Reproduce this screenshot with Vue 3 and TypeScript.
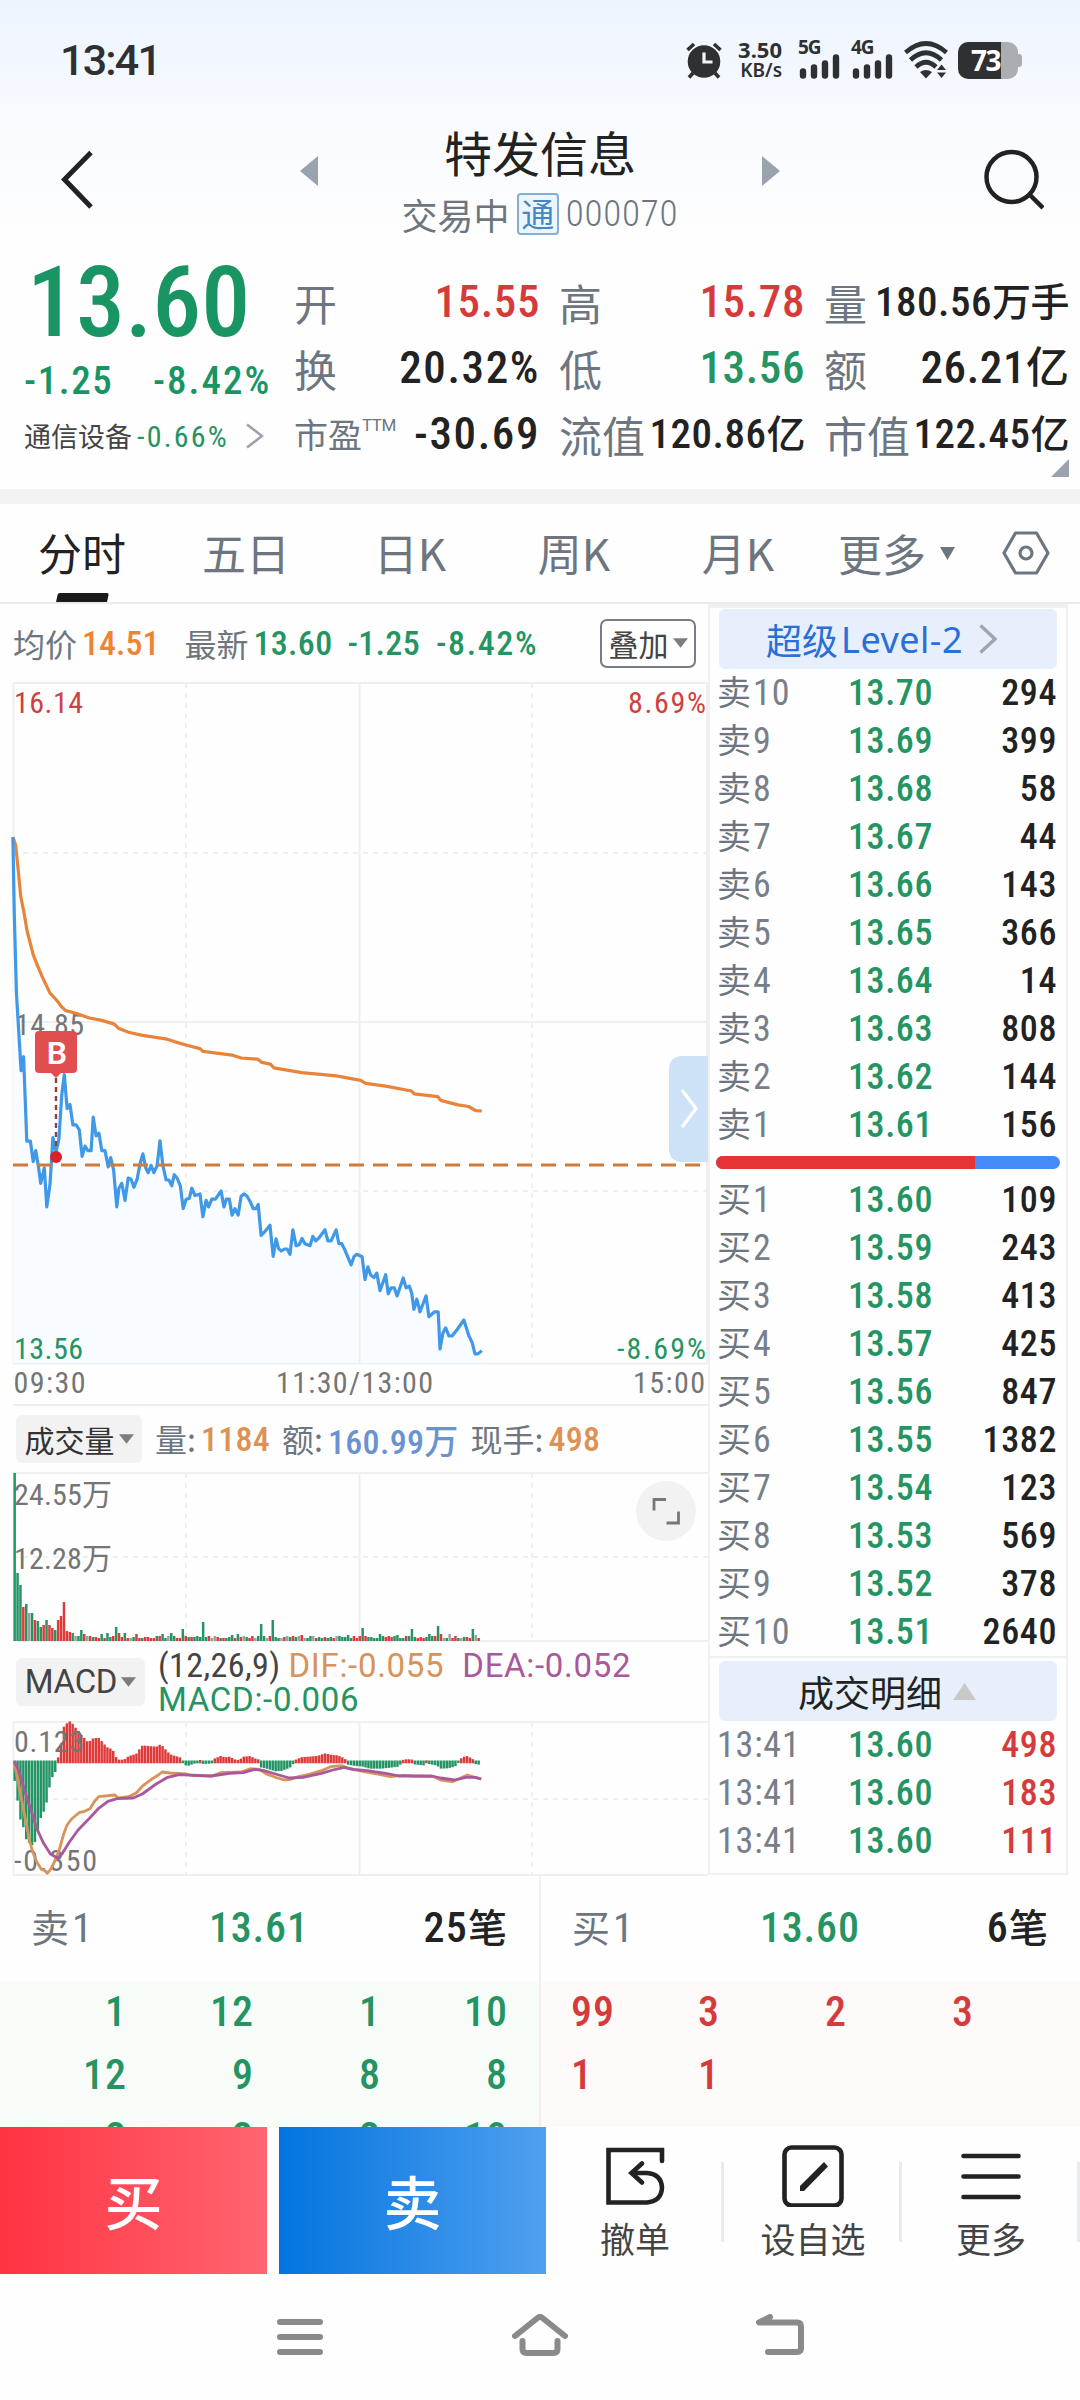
<script setup lang="ts">
type Tone = 'up' | 'down' | 'flat'
type Point = [number, number]

interface Stat { label: string; value: string; unit?: string; tone?: Tone; size?: string; sup?: string }
interface Bar { x: number; y: number; h: number; tone: Tone }

const stats: Stat[] = [
  { label: '开', value: '15.55', tone: 'up' },
  { label: '高', value: '15.78', tone: 'up' },
  { label: '量', value: '180.56', unit: '万手', size: 'small' },
  { label: '换', value: '20.32%', size: 'wide' },
  { label: '低', value: '13.56', tone: 'down' },
  { label: '额', value: '26.21', unit: '亿' },
  { label: '市盈', value: '-30.69', sup: 'TTM', size: 'wide' },
  { label: '流值', value: '120.86', unit: '亿', size: 'small' },
  { label: '市值', value: '122.45', unit: '亿', size: 'small' },
]

const tabs = ['分时', '五日', '日K', '周K', '月K']

const asks: [string, string, string][] = [
  ['10', '13.70', '294'], ['9', '13.69', '399'], ['8', '13.68', '58'], ['7', '13.67', '44'], ['6', '13.66', '143'],
  ['5', '13.65', '366'], ['4', '13.64', '14'], ['3', '13.63', '808'], ['2', '13.62', '144'], ['1', '13.61', '156'],
]
const bids: [string, string, string][] = [
  ['1', '13.60', '109'], ['2', '13.59', '243'], ['3', '13.58', '413'], ['4', '13.57', '425'], ['5', '13.56', '847'],
  ['6', '13.55', '1382'], ['7', '13.54', '123'], ['8', '13.53', '569'], ['9', '13.52', '378'], ['10', '13.51', '2640'],
]
const trades: [string, string, string][] = [
  ['13:41', '13.60', '498'], ['13:41', '13.60', '183'], ['13:41', '13.60', '111'],
]
const askQueue = ['1', '12', '1', '10', '12', '9', '8', '8', '2', '2', '2', '10']
const bidQueue = ['99', '3', '2', '3', '1', '1']

const parse = (s: string): Point[] => s.trim().split(/\s+/).map((p) => p.split(',').map(Number) as Point)
const line = (pts: Point[], sx: number, sy: number, dy: number): string =>
  pts.map(([x, y]) => `${(x / sx).toFixed(1)},${(y / sy + dy).toFixed(1)}`).join(' ')

// Intraday price and average price, sampled on a 2.8 × 2.45 grid
const pricePts = parse(`36,140 40,330 46,520 54,640 59,712 66,678 75,885 85,885 93,935 100,908 108,950 114,988 124,950 131,1046
140,990 148,876 157,910 165,880 173,770 180,722 188,805 196,795 204,845 213,845 222,857 230,922 238,897 246,908 255,908 261,826
269,872 277,865 285,908 294,908 303,948 310,925 318,955 327,1046 333,1000 341,988 350,1030 359,975 367,978 375,998 384,978
392,940 400,916 408,950 415,962 423,944 431,962 440,945 448,884 456,945 465,980 473,980 481,994 488,967 496,975 505,995
513,1050 521,1027 530,1025 537,1000 546,1018 560,1014 568,1070 577,1030 584,1046 593,1027 603,1027 619,1007 627,1046 634,1027
642,1027 650,1066 658,1050 667,1066 675,1020 684,1014 692,1020 700,1032 709,1050 717,1050 723,1040 731,1116 740,1108 756,1091
765,1167 773,1124 780,1148 788,1154 797,1149 804,1149 812,1162 820,1102 829,1141 838,1138 846,1123 854,1136 868,1141 876,1118
884,1129 893,1122 910,1102 918,1129 927,1129 941,1102 949,1136 957,1136 965,1150 983,1188 991,1168 999,1162 1014,1168
1022,1224 1030,1193 1038,1213 1047,1219 1055,1208 1064,1251 1080,1212 1087,1259 1095,1244 1104,1244 1112,1264 1129,1220
1137,1244 1146,1240 1153,1258 1159,1297 1167,1272 1176,1303 1193,1264 1201,1315 1217,1303 1227,1303 1232,1394 1240,1355
1248,1342 1257,1362 1266,1362 1281,1345 1299,1323 1313,1362 1322,1378 1330,1406 1338,1406 1349,1398`)
const avgPts = parse(`36,140 44,160 52,230 58,285 66,320 76,370 93,428 105,455 117,480 128,500 140,522 157,538 173,556 184,565
215,572 250,583 285,589 320,598 333,609 360,618 395,625 468,635 488,641 523,650 560,658 568,665 650,674 675,681 722,684 733,692
757,696 767,705 845,717 942,725 1010,736 1024,743 1080,750 1152,762 1160,769 1226,776 1234,785 1282,796 1312,800 1332,810 1349,811`)
const priceLine = line(pricePts, 2.8, 2.45, 98)
const avgLine = line(avgPts, 2.8, 2.45, 98)
const priceArea = `12.9,681 ${priceLine} 481.8,681`

const PITCH = 2.9
const COUNT = 161

// Volume bars: opening minutes and later spikes, quiet minutes follow a fixed rhythm
const opening: [number, Tone][] = [
  [168, 'down'], [68, 'down'], [56, 'down'], [34, 'up'], [37, 'down'], [28, 'flat'], [28, 'down'], [21, 'up'], [20, 'down'], [14, 'down'],
  [16, 'up'], [21, 'down'], [16, 'up'], [13, 'up'], [11, 'down'], [21, 'up'], [25, 'up'], [39, 'up'], [10, 'up'], [9, 'up'], [8, 'down'],
  [5, 'flat'], [5, 'down'], [11, 'down'], [7, 'up'], [5, 'flat'],
]
const spikes: Record<number, [number, Tone]> = {
  30: [7, 'down'], 32: [8, 'down'], 35: [14, 'down'], 36: [8, 'up'], 38: [8, 'down'], 42: [7, 'up'], 51: [7, 'down'], 54: [8, 'down'],
  58: [12, 'down'], 65: [19, 'down'], 75: [6, 'down'], 77: [7, 'down'], 85: [17, 'down'], 89: [21, 'down'], 99: [6, 'up'], 115: [6, 'down'],
  120: [13, 'down'], 126: [7, 'down'], 132: [6, 'down'], 137: [12, 'down'], 143: [7, 'down'], 146: [15, 'down'], 147: [7, 'up'],
  150: [7, 'flat'], 158: [12, 'down'], 159: [6, 'flat'], 160: [3, 'up'],
}
const volumes: Bar[] = Array.from({ length: COUNT }, (_, i) => {
  const n = (i * 7 + ((i * i) % 11)) % 13
  const quiet: [number, Tone] = [3 + (n % 3), n < 6 ? 'up' : n < 11 ? 'down' : 'flat']
  const [h, tone] = opening[i] ?? spikes[i] ?? quiet
  return { x: 13.4 + i * PITCH, y: 169 - h, h, tone }
})

// MACD histogram edge, interpolated between samples on a 2.178 × 3 grid
const histPts = parse(`30,410 37,475 43,535 50,560 57,600 64,610 71,618 78,600 84,555 90,525 97,510 103,475 110,420 121,393
124,390 126,352 128,350 133,305 139,258 145,250 152,244 158,252 165,265 172,275 178,288 184,295 190,305 197,302 203,294 215,294 222,305
228,315 235,324 241,326 248,335 254,357 262,360 272,357 278,350 285,346 296,342 303,328 310,316 322,318 340,320 349,313 355,320
361,330 368,340 375,346 388,350 394,354 397,357 398,375 410,377 425,370 431,370 433,360 437,360 440,372 455,371 462,370 464,357 480,348 490,352
500,350 510,358 520,360 530,350 545,348 552,354 562,358 565,359 567,382 580,386 590,390 600,394 612,393 622,388 632,382 638,372 640,371 642,360
655,352 670,350 690,348 708,340 722,345 735,346 745,352 752,358 755,360 757,374 770,377 790,380 805,386 830,386 850,383 868,380 873,371 876,360
882,358 895,358 898,359 901,373 920,376 925,376 927,361 930,361 933,372 950,376 960,386 975,385 990,380 997,372 1000,358 1010,350 1018,348 1026,355
1030,358 1033,372 1048,375`)
const edgeAt = (x: number): number => {
  const i = Math.max(1, histPts.findIndex((p) => p[0] >= x))
  const [x0, y0] = histPts[i - 1]
  const [x1, y1] = histPts[i]
  return y0 + ((y1 - y0) * (Math.max(x, x0) - x0)) / (x1 - x0)
}
const hist: Bar[] = Array.from({ length: COUNT }, (_, i) => {
  const x = 13.4 + i * PITCH
  const e = edgeAt(Math.min(1047, (x + 1) * 2.178)) / 3 - 81
  return e < 41 ? { x, y: e, h: 42.3 - e, tone: 'up' } : { x, y: 39.5, h: Math.max(2, e - 39.5), tone: 'down' }
})
const difLine = line(parse(`31,365 36,400 43,450 50,500 57,550 64,600 71,635 80,665 90,688 98,692 103,700 112,685 122,655 130,625 138,585
146,555 156,537 172,518 184,514 196,506 205,486 215,470 250,465 258,474 280,470 297,458 312,436 330,418 345,405 353,396 370,399
405,402 420,407 462,408 480,398 525,396 545,386 565,388 580,402 600,412 620,420 632,418 650,410 675,402 700,392 720,380 745,377
760,386 790,394 820,402 850,410 880,406 900,408 945,410 960,420 985,425 1000,416 1018,405 1035,412 1048,417`), 2.178, 3, -81)
const deaLine = line(parse(`31,364 40,390 48,425 60,480 70,520 80,565 95,610 110,642 125,654 135,642 150,608 170,570 195,535 215,505
235,484 255,476 290,474 310,462 340,432 365,412 390,404 460,408 500,400 530,398 555,388 575,392 600,402 630,414 660,412 700,400
725,390 750,382 770,388 800,392 840,400 870,408 940,408 960,414 990,420 1015,412 1035,412 1048,417`), 2.178, 3, -81)
</script>

<template>
  <div class="screen">
    <header class="top">
      <div class="status">
        <span class="clock">13:41</span>
        <div class="status-icons">
          <svg class="alarm" width="38" height="38" viewBox="0 0 38 38">
            <circle cx="19" cy="20.5" r="16.3" fill="#2f3032" />
            <path d="M2.500 9 9 3M35.500 9 29 3M8 32l-4 4.500M30 32l4 4.500" stroke="#2f3032" stroke-width="3.600" fill="none" />
            <path d="M19 11.500V21h8.500" stroke="#eef4fd" stroke-width="3.200" fill="none" />
          </svg>
          <div class="speed"><b>3.50</b><b>KB/s</b></div>
          <div v-for="g in ['5G', '4G']" :key="g" class="signal">
            <b>{{ g }}</b>
            <svg width="42" height="26" viewBox="0 0 42 26">
              <path d="M5 18.500V22.500M16 14.500V22.500M27 10.500V22.500M38 4.500V22.500" stroke="#2f3032" stroke-width="6.400" stroke-linecap="round" />
            </svg>
          </div>
          <svg class="wifi" width="44" height="38" viewBox="0 0 44 38">
            <g fill="none" stroke="#2f3032" stroke-width="4.600">
              <path d="M1.500 11.500Q22-6.500 42.500 11.500" />
              <path d="M6.500 19Q22 4.500 37.500 19" />
              <path d="M12 26Q22 16.500 32 26" />
            </g>
            <path d="M16 31q6-4 12 0l-6 6.500zM33 29l4.500-5.500L42 29zM33 31.500h9L37.500 37z" fill="#2f3032" />
          </svg>
          <div class="battery"><i></i><b>73</b></div>
        </div>
      </div>

      <div class="title-bar">
        <svg width="40" height="60" viewBox="0 0 40 60"><path d="M34 2.500 7.500 29.500 34 57" fill="none" stroke="#222" stroke-width="5" /></svg>
        <svg class="prev" width="18" height="30" viewBox="0 0 18 30"><path d="M18 0v30L0 15z" fill="#9aa3ad" /></svg>
        <div class="title">
          <h1>特发信息</h1>
          <p>交易中<em>通</em><span>000070</span></p>
        </div>
        <svg class="next" width="18" height="30" viewBox="0 0 18 30"><path d="M0 0v30l18-15z" fill="#9aa3ad" /></svg>
        <svg class="search" width="62" height="62" viewBox="0 0 62 62">
          <circle cx="29.500" cy="29" r="25" fill="none" stroke="#222" stroke-width="4.500" />
          <path d="M47.500 46.500 61 60" stroke="#222" stroke-width="4.500" />
        </svg>
      </div>
    </header>

    <section class="quote">
      <div class="last">
        <div class="price">13.60</div>
        <div class="change"><span>-1.25</span><span>-8.42%</span></div>
        <div class="sector">
          <span>通信设备</span><b>-0.66%</b>
          <svg width="18" height="26" viewBox="0 0 18 26"><path d="M1 1.500 16 13 1 24.500" fill="none" stroke="#9aa3ad" stroke-width="2.600" /></svg>
        </div>
      </div>
      <div class="stats">
        <div v-for="s in stats" :key="s.label" class="stat">
          <span class="lab" :class="{ tight: s.sup }">{{ s.label }}<sup v-if="s.sup">{{ s.sup }}</sup></span>
          <span class="val" :class="[s.tone, s.size]">{{ s.value }}<i v-if="s.unit">{{ s.unit }}</i></span>
        </div>
      </div>
      <svg class="corner" width="18" height="18" viewBox="0 0 18 18"><path d="M18 0v18H0z" fill="#9aa3ad" /></svg>
    </section>

    <nav class="tabs">
      <span v-for="(t, i) in tabs" :key="t" class="tab" :class="{ on: i === 0 }">{{ t }}</span>
      <span class="tab more">更多<svg width="15" height="13" viewBox="0 0 15 13"><path d="M0 0h15L7.500 13z" fill="#6d7680" /></svg></span>
      <svg class="gear" width="48" height="44" viewBox="0 0 48 44">
        <path d="M13.500 2h21L46 22 34.500 42h-21L2 22z" fill="none" stroke="#6d7680" stroke-width="3.200" stroke-linejoin="round" />
        <circle cx="24" cy="22" r="6" fill="none" stroke="#6d7680" stroke-width="3.200" />
      </svg>
    </nav>

    <main class="board">
      <div class="charts">
        <div class="info">
          <label>均价</label><b class="avg">14.51</b>
          <label class="new">最新</label><b>13.60</b><b class="c1">-1.25</b><b class="c2">-8.42%</b>
          <button class="overlay">叠加<svg width="15" height="10" viewBox="0 0 14 9"><path d="M0 0h14L7 9z" fill="#7d7d7d" /></svg></button>
        </div>

        <svg class="plot" width="708" height="724" viewBox="0 0 708 724">
          <g class="grid">
            <path d="M13 1H708M13 340H708M13 681.500H708M13 723H708M13.500 1V682M359.500 1V682M707 1V682" />
            <path class="dash" d="M13 171H708M13 509H708M186 1V682M532 1V682" />
          </g>
          <polygon :points="priceArea" fill="#f8fbff" />
          <path class="over" d="M359.500 509V682" />
          <g class="tick">
            <text x="14" y="31" class="upf" textLength="69">16.14</text>
            <text x="706" y="31" class="upf" text-anchor="end" textLength="78">8.69%</text>
            <text x="15" y="353" textLength="69">14.85</text>
            <text x="14" y="677" class="downf" textLength="69">13.56</text>
            <text x="706" y="677" class="downf" text-anchor="end" textLength="89">-8.69%</text>
            <text x="13.500" y="711" textLength="72">09:30</text>
            <text x="276" y="711" textLength="157">11:30/13:00</text>
            <text x="705" y="711" text-anchor="end" textLength="72">15:00</text>
          </g>
          <polyline :points="avgLine" fill="none" stroke="#e8843a" stroke-width="3.200" stroke-linejoin="round" />
          <polyline :points="priceLine" fill="none" stroke="#3f98e8" stroke-width="3.200" stroke-linejoin="round" />
          <path d="M13 483H708" stroke="#d27b38" stroke-width="3" stroke-dasharray="15 9" />
          <path d="M56 396V468" stroke="#8f3f3f" stroke-width="2.400" stroke-dasharray="5 4" />
          <circle cx="56" cy="475" r="6" fill="#d9232a" />
          <path d="M51 391h10l-5 5z" fill="#e14e50" />
          <rect x="35" y="349" width="42" height="42" rx="4" fill="#e14e50" />
          <text class="mark" x="57" y="382" text-anchor="middle">B</text>
          <path d="M708 374H683q-14 0-14 14v78q0 14 14 14h25z" fill="#cde2f7" />
          <path d="M682 408l14 18.500L682 445" fill="none" stroke="#fff" stroke-width="3.200" />
        </svg>

        <div class="ind vol">
          <button class="pick">成交量<svg width="15" height="10" viewBox="0 0 14 9"><path d="M0 0h14L7 9z" fill="#7d7d7d" /></svg></button>
          <label>量:</label><b class="or">1184</b><label class="g">额:</label><b class="bl">160.99万</b><label class="g">现手:</label><b class="or">498</b>
        </div>
        <svg class="plot" width="708" height="170" viewBox="0 0 708 170">
          <g class="grid">
            <path d="M13 1H708M359.500 1V169M13 169H708" />
            <path class="dash" d="M13 85H708M186 1V169M532 1V169" />
          </g>
          <rect v-for="(b, i) in volumes" :key="i" :x="b.x" :y="b.y" width="2.500" :height="b.h" :class="b.tone" />
          <g class="tick">
            <text x="14" y="33" textLength="98">24.55万</text>
            <text x="14" y="97" textLength="98">12.28万</text>
          </g>
          <circle cx="666" cy="39" r="30" fill="#f2f2f2" />
          <path d="M654 38.500V27.500h12M678.500 39.500v11.500h-12" fill="none" stroke="#777" stroke-width="2.800" />
        </svg>

        <div class="ind macd">
          <button class="pick">MACD<svg width="15" height="10" viewBox="0 0 14 9"><path d="M0 0h14L7 9z" fill="#7d7d7d" /></svg></button>
          <div class="legend">
            <div><span>(12,26,9)</span><span class="dif">DIF:-0.055</span><span class="dea">DEA:-0.052</span></div>
            <div><span class="mc">MACD:-0.006</span></div>
          </div>
        </div>
        <svg class="plot" width="708" height="155" viewBox="0 0 708 155">
          <g class="grid">
            <path d="M13 1H708M359.500 1V154M13.500 1V154M13 154H708" />
            <path class="dash" d="M13 78H708M186 1V154M532 1V154" />
          </g>
          <rect v-for="(b, i) in hist" :key="i" :x="b.x" :y="b.y" width="2.500" :height="b.h" :class="b.tone" />
          <g class="tick">
            <text x="14" y="31" textLength="70">0.123</text>
            <text x="14" y="150" textLength="83">-0.350</text>
          </g>
          <polyline :points="difLine" fill="none" stroke="#d8935a" stroke-width="2.800" stroke-linejoin="round" />
          <polyline :points="deaLine" fill="none" stroke="#a9589c" stroke-width="2.800" stroke-linejoin="round" />
        </svg>
      </div>

      <aside class="book">
        <div class="level">超级<span>Level-2</span><svg width="18" height="30" viewBox="0 0 18 30"><path d="M1.500 1.500 16 15 1.500 28.500" fill="none" stroke="#a0a6ad" stroke-width="3.400" /></svg></div>
        <div v-for="r in asks" :key="r[1]" class="row"><span>卖<i>{{ r[0] }}</i></span><b class="p">{{ r[1] }}</b><b class="q">{{ r[2] }}</b></div>
        <div class="ratio"><i></i></div>
        <div v-for="r in bids" :key="r[1]" class="row"><span>买<i>{{ r[0] }}</i></span><b class="p">{{ r[1] }}</b><b class="q">{{ r[2] }}</b></div>
        <div class="detail-wrap">
          <div class="detail">成交明细<svg width="23" height="17" viewBox="0 0 23 17"><path d="M11.500 0 23 17H0z" fill="#c8c8c8" /></svg></div>
        </div>
        <div v-for="(r, i) in trades" :key="i" class="row"><span><i class="t">{{ r[0] }}</i></span><b class="p">{{ r[1] }}</b><b class="q up">{{ r[2] }}</b></div>
      </aside>
    </main>

    <section class="queues">
      <div class="side ask">
        <div class="head"><span>卖<i>1</i></span><b>13.61</b><em>25<u>笔</u></em></div>
        <div class="cells"><span v-for="(n, i) in askQueue" :key="i">{{ n }}</span></div>
      </div>
      <div class="side bid">
        <div class="head"><span>买<i>1</i></span><b>13.60</b><em>6<u>笔</u></em></div>
        <div class="cells"><span v-for="(n, i) in bidQueue" :key="i">{{ n }}</span></div>
      </div>
    </section>

    <footer class="actions">
      <button class="buy">买</button>
      <button class="sell">卖</button>
      <div class="act">
        <svg width="62" height="62" viewBox="0 0 62 62">
          <path d="M58 16V5H4.500V57.500H43Q57.500 56 58 42.500 57 29 43 28H29" fill="none" stroke="#222" stroke-width="4.600" stroke-linecap="round" />
          <path d="M38 18.500 27.500 28 38 37.500" fill="none" stroke="#222" stroke-width="4.600" stroke-linecap="round" />
        </svg>
        <span>撤单</span>
      </div>
      <div class="act">
        <svg width="62" height="62" viewBox="0 0 62 62">
          <rect x="2.500" y="2.500" width="57" height="58" rx="7" fill="none" stroke="#222" stroke-width="4.600" />
          <path d="M18 46v-5l24-24 4 4.500L22 46z" fill="#222" />
        </svg>
        <span>设自选</span>
      </div>
      <div class="act">
        <svg width="62" height="62" viewBox="0 0 62 62"><path d="M3.500 11h55M3.500 31.500h55M3.500 52h55" stroke="#222" stroke-width="4.600" stroke-linecap="round" /></svg>
        <span>更多</span>
      </div>
    </footer>

    <div class="sysnav">
      <svg width="52" height="46" viewBox="0 0 52 46"><path d="M6 8h40M6 23h40M6 38h40" stroke="#8a8a8a" stroke-width="6" stroke-linecap="round" /></svg>
      <svg width="60" height="46" viewBox="0 -3 60 46">
        <path d="M5 19 27.500 1Q30-1 32.500 1L55 19M12.500 24v8q0 4 4 4h27q4 0 4-4v-8" fill="none" stroke="#8a8a8a" stroke-width="6" stroke-linecap="round" stroke-linejoin="round" />
      </svg>
      <svg width="52" height="46" viewBox="0 0 52 46"><path d="M16 3 5 8.500H43q4 0 4 4V34q0 4-4 4H14" fill="none" stroke="#8a8a8a" stroke-width="6" stroke-linecap="round" stroke-linejoin="round" /></svg>
    </div>
  </div>
</template>

<style>
body { background: #fefefe; overflow: hidden; }
</style>

<style scoped>
.screen {
  --num: 'Roboto Condensed', 'Roboto', 'Noto Sans CJK SC', sans-serif;
  --red: #d63b3b;
  --green: #249463;
  --gray: #6d7680;
  width: 1080px;
  height: 2400px;
  display: flex;
  flex-direction: column;
  overflow: hidden;
  background: #fefefe;
  color: #222;
  font-family: 'Noto Sans CJK SC', sans-serif;
}
.screen *, .screen *::after { box-sizing: border-box; }
h1, p { margin: 0; font-weight: 400; }
i, em { font-style: normal; }
u { text-decoration: none; }
button { border: 0; padding: 0; font-family: inherit; }
svg { display: block; flex: none; }
b { font-weight: 500; }

.top { height: 250px; background: linear-gradient(#edf4fe, #f7faff 45%, #fefefe 95%); }
.status { height: 120px; padding: 0 62px 0 60px; display: flex; align-items: center; justify-content: space-between; }
.clock { font: 500 43px/60px Roboto, sans-serif; letter-spacing: -1.800px; color: #2f3032; }
.status-icons { display: flex; align-items: center; color: #2f3032; font-family: 'Noto Sans', sans-serif; }
.status-icons b { font-weight: 700; }
.speed { width: 50px; margin-left: 9px; margin-right: 16px; display: flex; flex-direction: column; font-size: 22px; line-height: 21px; text-align: right; }
.speed b + b { font-size: 19px; font-weight: 600; }
.signal { width: 53px; height: 38px; display: grid; align-items: end; }
.signal b { grid-area: 1 / 1; align-self: start; margin-top: -4px; font-size: 19px; line-height: 20px; letter-spacing: -1px; }
.signal svg { grid-area: 1 / 1; }
.wifi { margin-right: 10px; }
.battery { width: 60px; height: 37px; position: relative; border-radius: 10px; background: linear-gradient(90deg, #2f3032 43px, #aaadb1 43px); display: flex; align-items: center; padding-left: 13px; color: #fff; }
.battery i { position: absolute; right: -4px; top: 12px; width: 4px; height: 13px; border-radius: 0 3px 3px 0; background: #aaadb1; }
.battery b { font-size: 28px; letter-spacing: -1.500px; }

.title-bar { height: 130px; padding-left: 57px; display: flex; align-items: flex-start; }
.title-bar > svg:first-child { margin-top: 30px; }
.prev { margin: 36px 0 0 203px; }
.title { width: 444px; text-align: center; margin-top: -1px; }
.title h1 { font-size: 48px; line-height: 64px; color: #222; }
.title p { height: 54px; display: flex; align-items: center; justify-content: center; font-size: 36px; line-height: 50px; color: var(--gray); margin-top: 4px; }
.title em { width: 42px; height: 42px; margin: 0 7px; border: 2px solid #86add4; border-radius: 4px; background: #edf5fc; color: #4686c4; font-size: 33px; line-height: 36px; text-align: center; }
.title p span { font: 300 37px/50px var(--num); letter-spacing: .8px; }
.next { margin-top: 36px; }
.search { margin: 28px 0 0 202px; }

.quote { height: 254px; border-bottom: 15px solid #f3f3f3; display: flex; position: relative; }
.last { width: 294px; padding-left: 24px; color: #189562; font-family: var(--num); }
.price { height: 102px; font-size: 98px; font-weight: 500; line-height: 105px; letter-spacing: 0; padding-left: 3px; }
.change { display: flex; height: 58px; align-items: center; font-size: 39px; font-weight: 500; letter-spacing: 1.600px; }
.change span:first-child { width: 129px; }
.change span + span { letter-spacing: 2px; }
.sector { display: flex; align-items: center; height: 52px; color: #444; }
.sector span { font: 27px/40px 'Noto Sans CJK SC', sans-serif; width: 113px; }
.sector b { font-size: 30px; font-weight: 400; color: var(--green); width: 109px; letter-spacing: 2.200px; }
.stats { width: 775px; padding-top: 20px; display: grid; grid-template-columns: 246px 265px 264px; grid-auto-rows: 66px; }
.stat { display: flex; justify-content: space-between; align-items: center; padding-left: 19px; }
.stat:nth-child(3n + 1) { padding-left: 0; }
.lab { color: var(--gray); font-size: 43px; line-height: 62px; white-space: nowrap; margin-top: -2px; }
.lab.tight { font-size: 34px; }
.lab sup { font: 400 17px/20px Roboto, sans-serif; letter-spacing: -.5px; vertical-align: 17px; }
.val { font: 500 45px/62px var(--num); white-space: nowrap; letter-spacing: .6px; margin-top: -2px; }
.val.wide { letter-spacing: 1.600px; }
.val i { font-size: 43px; letter-spacing: 0; }
.val.small { font-size: 41px; letter-spacing: .5px; }
.val.small i { font-size: 39px; letter-spacing: -.5px; }
.up { color: var(--red); fill: #e03a38; }
.down { color: var(--green); fill: #259465; }
.flat { fill: #96a59e; }
.corner { position: absolute; right: 11px; bottom: 12px; }

.tabs { height: 100px; display: flex; align-items: center; border-bottom: 2px solid #ebebeb; }
.tab { width: 164px; height: 98px; font-size: 44px; line-height: 96px; text-align: center; color: var(--gray); position: relative; }
.tab.on { color: #222; }
.tab.on::after { content: ''; position: absolute; left: 57px; bottom: 0; width: 51px; height: 9px; background: #1a1a1a; border-radius: 2px 2px 0 0; transform: skewX(-12deg); }
.tab.more { width: 182px; padding-left: 18px; display: flex; align-items: center; gap: 14px; }
.gear { margin-top: -1px; }

.board { height: 1271px; display: flex; }
.charts { width: 708px; }
.info { height: 78px; padding-left: 13px; display: flex; align-items: center; font-family: var(--num); color: var(--green); }
.info label { font: 32px/50px 'Noto Sans CJK SC', sans-serif; color: var(--gray); margin-right: 5px; }
.info b { font-size: 34px; letter-spacing: .3px; }
.info .avg { color: #f08332; letter-spacing: 0; }
.info .new { margin-left: 25px; }
.info .c1 { margin-left: 15px; }
.info .c2 { margin-left: 16px; letter-spacing: 1.600px; }
.overlay { margin-left: auto; margin-right: 12px; width: 96px; height: 49px; border: 2px solid #777d84; border-radius: 7px; background: none; font-size: 30px; color: #444; display: flex; align-items: center; justify-content: center; gap: 4px; }
.grid path, .over { stroke: #efefef; stroke-width: 2; fill: none; }
.grid .dash { stroke-dasharray: 5 5; }
.tick { font: 400 30px var(--num); fill: #757575; }
.upf { fill: #cf4040; }
.downf { fill: var(--green); }
.mark { font: 600 32px Roboto, sans-serif; fill: #fff; }
.ind { height: 66px; padding-left: 16px; display: flex; align-items: center; font-family: var(--num); }
.pick { height: 48px; padding: 0; justify-content: center; border-radius: 6px; background: #f2f2f2; color: #333; font-size: 30px; display: flex; align-items: center; gap: 4px; }
.vol .pick { width: 126px; font-family: 'Noto Sans CJK SC', sans-serif; margin-right: 13px; }
.vol label { font: 32px/50px 'Noto Sans CJK SC', sans-serif; color: var(--gray); margin-right: 5px; margin-top: -3px; }
.vol label.g { margin-left: 12px; }
.vol b { font-size: 34px; letter-spacing: .3px; }
.or { color: #dd9152; }
.bl { color: #6a92d0; }
.macd { height: 79px; }
.macd .pick { width: 129px; font-size: 33px; font-family: Roboto, sans-serif; letter-spacing: -.3px; color: #444; }
.legend { margin-left: 13px; font-size: 34px; line-height: 34px; color: #444; letter-spacing: .4px; }
.legend div { white-space: pre; height: 34px; }
.dif, .dea, .mc { font: 400 33px/34px Roboto, sans-serif; letter-spacing: .7px; }
.dif { color: #d8935a; margin-left: 8px; }
.dea { color: #a9589c; margin-left: 18px; }
.mc { color: var(--green); }

.book { width: 360px; border: 2px solid #f0f0f0; border-top-width: 4px; padding: 1px 9px 0; }
.level { height: 60px; border-radius: 6px; background: #e6effb; color: #2a6fd6; font-size: 36px; display: flex; align-items: center; padding-left: 47px; }
.level span { font-family: 'Noto Sans', sans-serif; font-size: 36px; letter-spacing: .5px; margin-left: 3px; }
.level svg { margin-left: 16px; }
.row { height: 48px; display: flex; align-items: center; font-family: var(--num); line-height: 48px; }
.row span { width: 131px; font: 34px/44px 'Noto Sans CJK SC', sans-serif; height: 48px; color: var(--gray); display: flex; align-items: flex-start; margin-left: -2px; }
.row i { font: 400 36px/48px var(--num); margin-left: 2px; letter-spacing: 1.100px; color: #77808a; }
.row i.t { margin-left: 0; letter-spacing: .8px; }
.row b { font-size: 36px; letter-spacing: .6px; }
.row .p { color: var(--green); }
.row .q { margin-left: auto; }
.row .q.up { color: var(--red); }
.ratio { height: 13px; margin: 7px -3px 7px; border-radius: 7px; background: #448bf8; overflow: hidden; }
.ratio i { display: block; width: 259px; height: 13px; background: #e63434; }
.detail-wrap { border-top: 2px solid #f0f0f0; margin: 0 -9px; padding: 3px 9px 0; }
.detail { height: 60px; border-radius: 6px; background: #e6effb; font-size: 36px; display: flex; align-items: center; justify-content: center; gap: 11px; padding-right: 2px; }

.queues { height: 252px; display: flex; overflow: hidden; }
.side { width: 541px; border-right: 2px solid #f0f0f0; }
.side.bid { width: 539px; border: 0; }
.head { height: 106px; display: flex; align-items: center; font: 500 42px/60px var(--num); padding: 0 32px 0 31px; }
.head span { width: 178px; font: 38px/56px 'Noto Sans CJK SC', sans-serif; height: 60px; color: var(--gray); display: flex; align-items: flex-start; }
.bid .head span { width: 188px; }
.head span i { font: 400 41px/60px var(--num); margin-left: 3px; }
.head b { color: var(--green); letter-spacing: .8px; }
.head em { margin-left: auto; letter-spacing: 1.200px; }
.head u { font-size: 39px; letter-spacing: 0; }
.cells { display: grid; grid-template-columns: repeat(4, 127px); grid-auto-rows: 63px; height: 200px; font: 500 42px/62px var(--num); }
.ask .cells { background: #f8fcf9; color: var(--green); text-align: right; letter-spacing: 1px; }
.bid .cells { background: #fefafa; color: var(--red); padding-left: 30px; letter-spacing: 1px; }

.actions { height: 147px; display: flex; background: #fefefe; position: relative; }
.actions button { width: 267px; color: #fff; font-size: 58px; font-weight: 500; line-height: 147px; }
.buy { background: linear-gradient(90deg, #ff3342, #ff6570); }
.sell { background: linear-gradient(90deg, #0374dd, #50a0ef); margin-left: 12px; }
.act { width: 178px; padding-top: 18px; display: flex; flex-direction: column; align-items: center; position: relative; }
.act::after { content: ''; position: absolute; right: 0; top: 35px; width: 3px; height: 80px; background: #e9eaeb; }
.act span { font-size: 35px; line-height: 50px; color: #444; margin-top: 6px; white-space: nowrap; }

.sysnav { height: 126px; display: flex; padding-left: 274px; padding-top: 40px; gap: 184px; }
</style>
